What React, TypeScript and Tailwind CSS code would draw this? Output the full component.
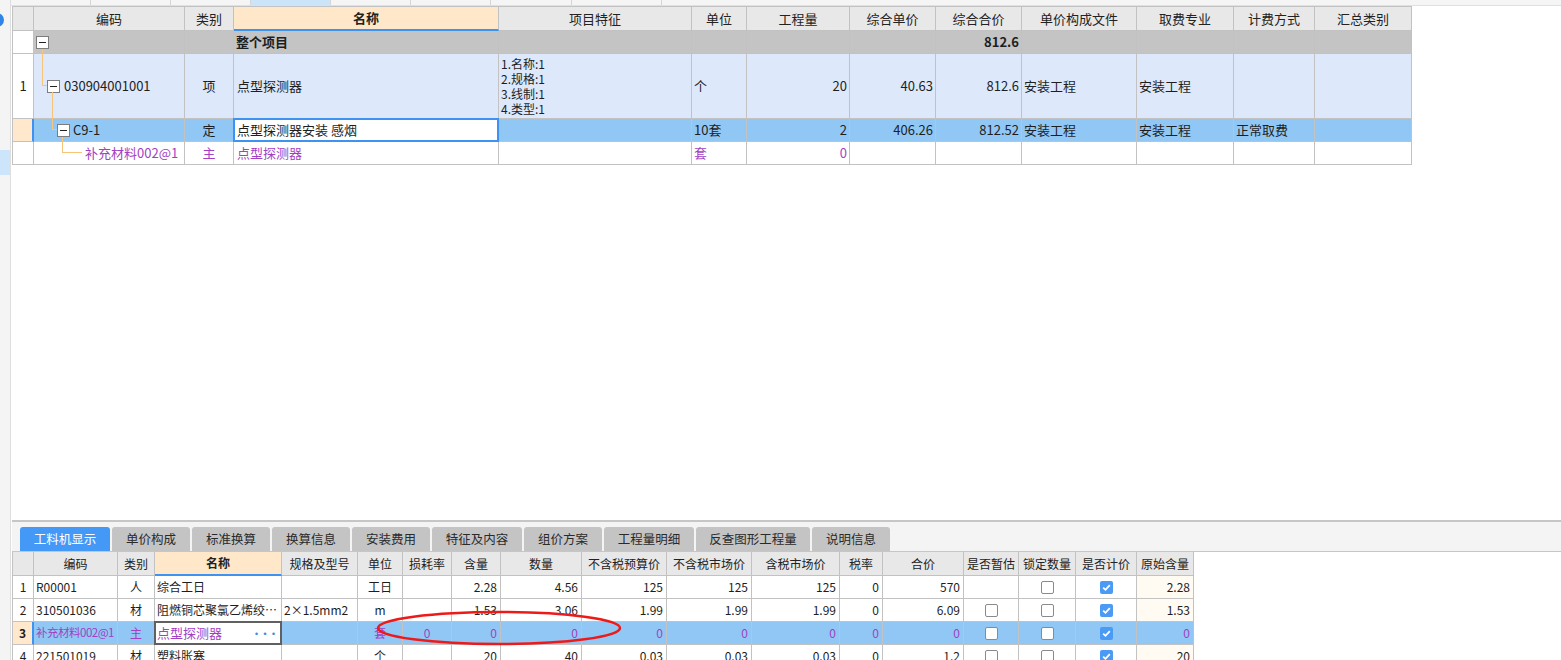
import React from "react";

const TW = [
  "w-[21px]",
  "w-[151px]",
  "w-[49px]",
  "w-[265px]",
  "w-[193px]",
  "w-[55px]",
  "w-[103px]",
  "w-[86px]",
  "w-[86px]",
  "w-[115px]",
  "w-[97px]",
  "w-[81px]",
  "w-[97px]",
];

const BW = [
  "w-[21px]",
  "w-[84px]",
  "w-[37px]",
  "w-[127px]",
  "w-[76px]",
  "w-[45px]",
  "w-[49px]",
  "w-[49px]",
  "w-[81px]",
  "w-[85px]",
  "w-[85px]",
  "w-[88px]",
  "w-[43px]",
  "w-[81px]",
  "w-[55px]",
  "w-[57px]",
  "w-[61px]",
  "w-[57px]",
];

const TOP_HEAD = ["", "编码", "类别", "名称", "项目特征", "单位", "工程量", "综合单价", "综合合价", "单价构成文件", "取费专业", "计费方式", "汇总类别"];

const BOT_HEAD = ["", "编码", "类别", "名称", "规格及型号", "单位", "损耗率", "含量", "数量", "不含税预算价", "不含税市场价", "含税市场价", "税率", "合价", "是否暂估", "锁定数量", "是否计价", "原始含量"];

const TABS = [
  { label: "工料机显示", w: "w-[90px]" },
  { label: "单价构成", w: "w-[78px]" },
  { label: "标准换算", w: "w-[78px]" },
  { label: "换算信息", w: "w-[78px]" },
  { label: "安装费用", w: "w-[78px]" },
  { label: "特征及内容", w: "w-[90px]" },
  { label: "组价方案", w: "w-[78px]" },
  { label: "工程量明细", w: "w-[90px]" },
  { label: "反查图形工程量", w: "w-[114px]" },
  { label: "说明信息", w: "w-[78px]" },
];

type Align = "l" | "c" | "r";

function Cell({
  w,
  a = "l",
  cls = "",
  children,
}: {
  w: string;
  a?: Align;
  cls?: string;
  children?: React.ReactNode;
}) {
  const al = a === "c" ? "justify-center" : a === "r" ? "justify-end pr-[2px]" : "pl-[2px]";
  return (
    <div
      className={`flex h-full shrink-0 items-center overflow-hidden whitespace-nowrap border-r border-b border-[#c2c2c2] ${w} ${al} ${cls}`}
    >
      {children}
    </div>
  );
}

const MinusBox = () => (
  <span className="flex h-[13px] w-[13px] shrink-0 items-center justify-center border border-[#7d7d7d] bg-white">
    <span className="h-px w-[7px] bg-[#222]" />
  </span>
);

const Check = ({ on }: { on?: boolean }) =>
  on ? (
    <span className="flex h-[13px] w-[13px] items-center justify-center rounded-[2px] bg-[#4b9bf5]">
      <svg width="11" height="11" viewBox="0 0 11 11">
        <path d="M2.2 5.6 L4.5 7.8 L8.8 3.2" fill="none" stroke="#fff" strokeWidth="1.8" />
      </svg>
    </span>
  ) : (
    <span className="h-[13px] w-[13px] rounded-[2px] border border-[#8a8a8a] bg-white" />
  );

const TopTable = () => {
  const purple = "text-[#a23fc3]";
  return (
    <div className="w-fit border-t border-l border-[#c2c2c2] text-[13px]">
      <div className="flex h-[24px] bg-[#e8e8e8] text-[#222]">
        {TOP_HEAD.map((h, i) => (
          <Cell
            key={i}
            w={TW[i]}
            a="c"
            cls={i === 3 ? "bg-[#ffe8c9] font-bold border-b-2 border-b-[#3d92f2]" : ""}
          >
            {h}
          </Cell>
        ))}
      </div>

      <div className="flex h-[23px] bg-[#c4c4c4]">
        <Cell w={TW[0]} cls="bg-white" />
        <Cell w={TW[1]}>
          <MinusBox />
        </Cell>
        <Cell w={TW[2]} />
        <Cell w={TW[3]} cls="font-bold">
          整个项目
        </Cell>
        <Cell w={TW[4]} />
        <Cell w={TW[5]} />
        <Cell w={TW[6]} />
        <Cell w={TW[7]} />
        <Cell w={TW[8]} a="r" cls="font-bold">
          812.6
        </Cell>
        <Cell w={TW[9]} />
        <Cell w={TW[10]} />
        <Cell w={TW[11]} />
        <Cell w={TW[12]} />
      </div>

      <div className="flex h-[65px] bg-[#dde9fb]">
        <Cell w={TW[0]} a="c" cls="bg-white">
          1
        </Cell>
        <Cell w={TW[1]} cls="pl-[13px] gap-[4px]">
          <MinusBox />
          <span>030904001001</span>
        </Cell>
        <Cell w={TW[2]} a="c">
          项
        </Cell>
        <Cell w={TW[3]} cls="pl-[3px]">
          点型探测器
        </Cell>
        <Cell w={TW[4]}>
          <div className="flex flex-col text-[12px]">
            <span className="h-[15px] leading-[15px]">1.名称:1</span>
            <span className="h-[15px] leading-[15px]">2.规格:1</span>
            <span className="h-[15px] leading-[15px]">3.线制:1</span>
            <span className="h-[15px] leading-[15px]">4.类型:1</span>
          </div>
        </Cell>
        <Cell w={TW[5]}>个</Cell>
        <Cell w={TW[6]} a="r">
          20
        </Cell>
        <Cell w={TW[7]} a="r">
          40.63
        </Cell>
        <Cell w={TW[8]} a="r">
          812.6
        </Cell>
        <Cell w={TW[9]}>安装工程</Cell>
        <Cell w={TW[10]}>安装工程</Cell>
        <Cell w={TW[11]} />
        <Cell w={TW[12]} />
      </div>

      <div className="flex h-[23px] bg-[#91c7f5]">
        <Cell w={TW[0]} cls="bg-[#ffe8cc] border-r-2 border-r-[#3d92f2]" />
        <Cell w={TW[1]} cls="pl-[23px] gap-[3px]">
          <MinusBox />
          <span>C9-1</span>
        </Cell>
        <Cell w={TW[2]} a="c">
          定
        </Cell>
        <div className="-mt-px -ml-px flex h-[24px] w-[266px] shrink-0 items-center border-2 border-[#3d92f2] bg-white pl-[2px]">
          点型探测器安装 感烟
        </div>
        <Cell w={TW[4]} />
        <Cell w={TW[5]}>10套</Cell>
        <Cell w={TW[6]} a="r">
          2
        </Cell>
        <Cell w={TW[7]} a="r">
          406.26
        </Cell>
        <Cell w={TW[8]} a="r">
          812.52
        </Cell>
        <Cell w={TW[9]}>安装工程</Cell>
        <Cell w={TW[10]}>安装工程</Cell>
        <Cell w={TW[11]}>正常取费</Cell>
        <Cell w={TW[12]} />
      </div>

      <div className={`flex h-[23px] bg-white ${purple}`}>
        <Cell w={TW[0]} />
        <Cell w={TW[1]} cls="pl-[51px]">
          补充材料002@1
        </Cell>
        <Cell w={TW[2]} a="c">
          主
        </Cell>
        <Cell w={TW[3]} cls="pl-[3px]">
          点型探测器
        </Cell>
        <Cell w={TW[4]} />
        <Cell w={TW[5]}>套</Cell>
        <Cell w={TW[6]} a="r">
          0
        </Cell>
        <Cell w={TW[7]} />
        <Cell w={TW[8]} />
        <Cell w={TW[9]} />
        <Cell w={TW[10]} />
        <Cell w={TW[11]} />
        <Cell w={TW[12]} />
      </div>
    </div>
  );
};

type BRow = {
  n: string;
  code: string;
  kind: string;
  name: string;
  spec: string;
  unit: string;
  loss: string;
  qty: string;
  num: string;
  p1: string;
  p2: string;
  p3: string;
  tax: string;
  total: string;
  est: boolean | null;
  orig: string;
};

const BROWS: BRow[] = [
  { n: "1", code: "R00001", kind: "人", name: "综合工日", spec: "", unit: "工日", loss: "", qty: "2.28", num: "4.56", p1: "125", p2: "125", p3: "125", tax: "0", total: "570", est: null, orig: "2.28" },
  { n: "2", code: "310501036", kind: "材", name: "阻燃铜芯聚氯乙烯绞…", spec: "2×1.5mm2", unit: "m", loss: "", qty: "1.53", num: "3.06", p1: "1.99", p2: "1.99", p3: "1.99", tax: "0", total: "6.09", est: false, orig: "1.53" },
  { n: "3", code: "补充材料002@1", kind: "主", name: "点型探测器", spec: "", unit: "套", loss: "0", qty: "0", num: "0", p1: "0", p2: "0", p3: "0", tax: "0", total: "0", est: false, orig: "0" },
  { n: "4", code: "221501019", kind: "材", name: "塑料胀塞", spec: "", unit: "个", loss: "", qty: "20", num: "40", p1: "0.03", p2: "0.03", p3: "0.03", tax: "0", total: "1.2", est: false, orig: "20" },
];

const BottomTable = () => (
  <div className="w-fit border-l border-[#c2c2c2] text-[12px]">
    <div className="flex h-[24px] bg-[#e8e8e8] text-[#222]">
      {BOT_HEAD.map((h, i) => (
        <Cell
          key={i}
          w={BW[i]}
          a="c"
          cls={i === 3 ? "bg-[#ffe8c9] font-bold border-b-2 border-b-[#3d92f2]" : ""}
        >
          {h}
        </Cell>
      ))}
    </div>
    {BROWS.map((r) => {
      const sel = r.n === "3";
      return (
        <div
          key={r.n}
          className={`flex h-[23px] ${sel ? "bg-[#91c7f5] text-[#a23fc3]" : "bg-white text-[#1e1e1e]"}`}
        >
          <Cell
            w={BW[0]}
            a="c"
            cls={sel ? "bg-[#ffe8cc] font-bold text-[#1e1e1e] border-r-2 border-r-[#3d92f2]" : ""}
          >
            {r.n}
          </Cell>
          <Cell w={BW[1]} cls={sel ? "pl-[1px] text-[11.5px] tracking-[-0.5px]" : "pl-[2px]"}>
            {r.code}
          </Cell>
          <Cell w={BW[2]} a="c">
            {r.kind}
          </Cell>
          {sel ? (
            <div className="-mt-px -ml-px flex h-[24px] w-[128px] shrink-0 items-center justify-between border-2 border-[#606060] bg-white pr-[3px] pl-[1px] text-[13px]">
              <span>{r.name}</span>
              <span className="text-[10px] font-bold tracking-[-1.5px] text-[#3b8fe0]">···</span>
            </div>
          ) : (
            <Cell w={BW[3]} cls="pl-[2px]">
              {r.name}
            </Cell>
          )}
          <Cell w={BW[4]} cls="pl-[2px]">
            {r.spec}
          </Cell>
          <Cell w={BW[5]} a="c">
            {r.unit}
          </Cell>
          <Cell w={BW[6]} a="c">
            {r.loss}
          </Cell>
          <Cell w={BW[7]} a="r" cls="pr-[3px]">
            {r.qty}
          </Cell>
          <Cell w={BW[8]} a="r" cls="pr-[3px]">
            {r.num}
          </Cell>
          <Cell w={BW[9]} a="r" cls="pr-[3px]">
            {r.p1}
          </Cell>
          <Cell w={BW[10]} a="r" cls="pr-[3px]">
            {r.p2}
          </Cell>
          <Cell w={BW[11]} a="r" cls="pr-[3px]">
            {r.p3}
          </Cell>
          <Cell w={BW[12]} a="r" cls="pr-[3px]">
            {r.tax}
          </Cell>
          <Cell w={BW[13]} a="r" cls="pr-[3px]">
            {r.total}
          </Cell>
          <Cell w={BW[14]} a="c">
            {r.est === null ? null : <Check on={r.est} />}
          </Cell>
          <Cell w={BW[15]} a="c">
            <Check />
          </Cell>
          <Cell w={BW[16]} a="c">
            <Check on />
          </Cell>
          <Cell w={BW[17]} a="r" cls={`pr-[3px] ${sel ? "" : "bg-[#fffaf2]"}`}>
            {r.orig}
          </Cell>
        </div>
      );
    })}
  </div>
);

export default function App() {
  return (
    <div className="relative flex h-[660px] w-[1561px] overflow-hidden bg-white font-['Noto_Sans_CJK_SC',sans-serif] text-[#1e1e1e]">
      <div className="flex w-[11px] shrink-0 flex-col border-r border-[#dedede] bg-[#f4f4f4]">
        <div className="mt-[150px] h-[25px] bg-[#cce5fa]" />
      </div>

      <div className="flex min-w-0 flex-1 flex-col">
        <div className="flex h-[6px] shrink-0 border-b border-[#e0e0e0] bg-[#f5f5f5]">
          <div className="w-[80px] border-r border-[#d6d6d6]" />
          <div className="w-[80px] border-r border-[#d6d6d6]" />
          <div className="w-[80px] border-r border-[#d6d6d6]" />
          <div className="w-[80px] border-r border-[#d6d6d6] bg-[#cce4f8]" />
          <div className="w-[80px] border-r border-[#d6d6d6]" />
          <div className="w-[80px] border-r border-[#d6d6d6]" />
          <div className="w-[81px] border-r border-[#d6d6d6]" />
          <div className="w-[90px] border-r border-[#d6d6d6]" />
        </div>

        <div className="h-[514px] shrink-0 pl-[1px]">
          <TopTable />
        </div>

        <div className="ml-[1px] h-[2px] shrink-0 bg-[#c6c6c6]" />

        <div className="ml-[1px] flex h-[30px] shrink-0 items-end gap-[2px] border-b border-[#c6c6c6] bg-[#f4f4f4] pl-[8px] text-[12.5px]">
          {TABS.map((t, i) => (
            <div
              key={t.label}
              className={`flex h-[24px] items-center justify-center rounded-t-[3px] ${t.w} ${
                i === 0 ? "bg-[#4499f7] text-white" : "bg-[#c4c4c4] text-[#2a2a2a]"
              }`}
            >
              {t.label}
            </div>
          ))}
        </div>

        <div className="shrink-0 pl-[1px]">
          <BottomTable />
        </div>
      </div>

      <svg
        className="pointer-events-none absolute top-0 left-0"
        width="1561"
        height="660"
        viewBox="0 0 1561 660"
      >
        <circle cx="-3" cy="20" r="7" fill="#2f86e6" />
        <g stroke="#f7c47a" strokeWidth="1" shapeRendering="crispEdges" fill="none">
          <path d="M42.5 49 V85.5 H47" />
          <path d="M52.5 92 V129.5 H57" />
          <path d="M62.5 137 V152.5 H82" />
        </g>
        <ellipse cx="499" cy="628" rx="121" ry="16" fill="none" stroke="#ee1a1a" strokeWidth="2.5" />
      </svg>
    </div>
  );
}
